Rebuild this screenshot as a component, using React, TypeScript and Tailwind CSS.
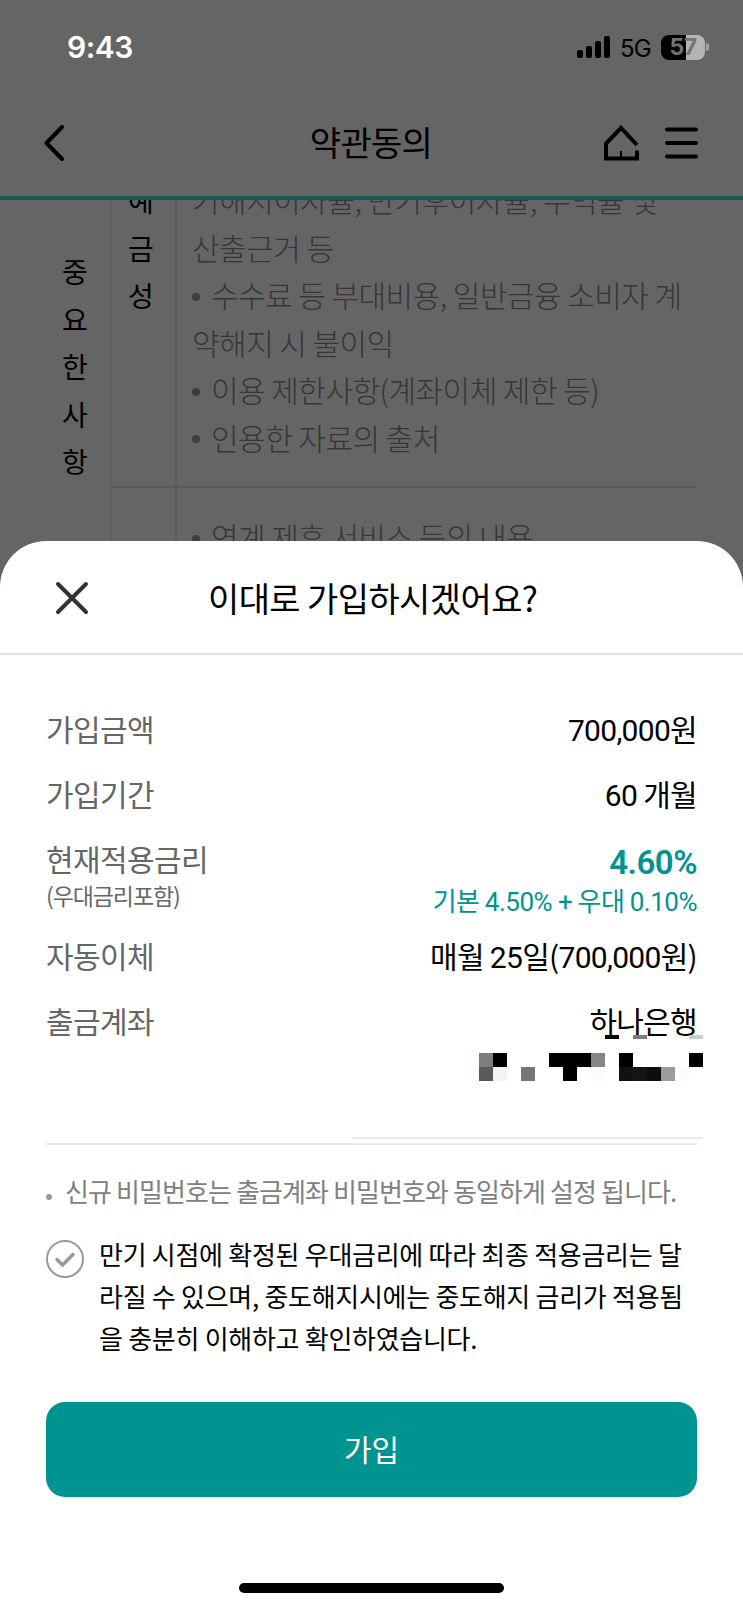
import { ReactNode } from 'react'

interface DetailRowProps {
  label: string
  note?: string
  className: string
  children: ReactNode
}

const termLines = [
  { text: '기해지이자율, 만기후이자율, 수익률 및', bullet: false },
  { text: '산출근거 등', bullet: false },
  { text: '수수료 등 부대비용, 일반금융 소비자 계', bullet: true },
  { text: '약해지 시 불이익', bullet: false },
  { text: '이용 제한사항(계좌이체 제한 등)', bullet: true },
  { text: '인용한 자료의 출처', bullet: true }
]

// Masked account number, one row of shades per strip
const maskTop = ['#fff', '#fdfdfd', '#7d7d7d', '#000', '#fff', '#fff', '#fff', '#000', '#000', '#000', '#868686', '#fff', '#000', '#fff', '#fff', '#fff', '#fff', '#000']
const maskBottom = ['#fff', '#fdfdfd', '#595959', '#f4f4f4', '#fff', '#767676', '#fff', '#fff', '#000', '#fff', '#fcfcfc', '#fff', '#111', '#151515', '#0d0d0d', '#9c9c9c', '#fcfcfc', '#fff']

function StatusBar() {
  return (
    <div className="flex h-[94px] items-center justify-between pl-[67px] pr-[34px]">
      <span className="font-[Inter] text-[30px] font-semibold leading-none tracking-[-0.5px] text-white">
        9:43
      </span>
      <div className="flex items-center">
        <svg className="h-6 w-[34px]" viewBox="0 0 34 24">
          <rect x="0" y="15" width="6" height="8" rx="2" />
          <rect x="9" y="11" width="6" height="12" rx="2" />
          <rect x="18" y="6" width="6" height="17" rx="2" />
          <rect x="27" y="1" width="6" height="22" rx="2" />
        </svg>
        <span className="ml-[9px] mt-[3px] w-[33px] whitespace-nowrap font-[Inter] text-[24px] leading-none tracking-[-0.8px]">
          5G
        </span>
        <div className="ml-2 flex h-[25px] w-11 items-center justify-center rounded-[8px] bg-[linear-gradient(90deg,#000_57%,#b4b4b4_57%)]">
          <span className="font-[Inter] text-[23px] font-bold leading-[25px] tracking-[-0.5px] text-[#737373]">57</span>
        </div>
        <div className="ml-px h-2 w-[3px] rounded-r-full bg-[#a3a3a3]" />
      </div>
    </div>
  )
}

function Header() {
  return (
    <header className="grid h-[106px] grid-cols-3 items-center border-b-4 border-[#1d5753] pb-1 pl-11 pr-[45px]">
      <svg className="h-9 w-5" viewBox="0 0 20 36" fill="none" stroke="#000" strokeWidth="4">
        <path d="M18 2 2.500 18l15.500 16" strokeLinecap="round" strokeLinejoin="round" />
      </svg>
      <h1 className="-mt-[3px] text-center text-[34px] leading-[50px] tracking-[-0.7px]">약관동의</h1>
      <div className="flex items-center justify-end gap-[26px]">
        <svg className="h-9 w-9" viewBox="0 0 36 36" fill="none" stroke="#000" strokeWidth="4">
          <path d="M34 20 18 3 3 18.500V33.500H34V25.500" />
          <path d="M18 33V26" strokeWidth="2" />
        </svg>
        <svg className="h-9 w-[33px]" viewBox="0 0 33 36" stroke="#000" strokeWidth="4" strokeLinecap="round">
          <path d="M2 4.500H31M2 18H31M2 31.500H31" />
        </svg>
      </div>
    </header>
  )
}

function Terms() {
  return (
    <div className="flex h-[360px] overflow-hidden pl-9 pr-[46px] text-[28px] leading-[47.5px]">
      <div className="flex w-[76px] flex-col items-center border-r-2 border-[#5d5e60] pl-1 pt-12">
        {['중', '요', '한', '사', '항'].map((char) => (
          <span key={char}>{char}</span>
        ))}
      </div>
      <div className="flex-1">
        <div className="flex h-[288px] border-b-2 border-[#585a5e]">
          <div className="flex w-[65px] shrink-0 flex-col items-center border-r-2 border-[#5a5b5d] pr-[5px]">
            {['예', '금', '성'].map((char) => (
              <span key={char} className="first:-mt-[23px]">{char}</span>
            ))}
          </div>
          <ul className="-mt-6 ml-[15px] text-[30px] font-light tracking-[-0.53px] text-[#363636]">
            {termLines.map((line) => (
              <li key={line.text} className="flex items-center whitespace-nowrap">
                {line.bullet && <i className="mr-[11px] mt-1 size-2 rounded-full bg-[#3d3d3d]" />}
                {line.text}
              </li>
            ))}
          </ul>
        </div>
        <div className="flex h-[80px]">
          <div className="w-[65px] border-r-2 border-[#5a5b5d]" />
          <div className="ml-[15px] mt-[17px] flex items-center text-[30px] font-light tracking-[-0.53px] text-[#363636]">
            <i className="mr-[11px] mt-1 size-2 rounded-full bg-[#3d3d3d]" />
            연계 제휴 서비스 등의 내용
          </div>
        </div>
      </div>
    </div>
  )
}

function DetailRow({ label, note, className, children }: DetailRowProps) {
  return (
    <div className={`flex justify-between ${className}`}>
      <dt className="text-[30px] leading-[38px] tracking-[-0.6px] text-[#666]">
        {label}
        {note && <p className="text-[23px] leading-[36px] tracking-[-1.1px]">{note}</p>}
      </dt>
      <dd className="text-right text-[30px] leading-[38px] tracking-[-0.7px] text-black">{children}</dd>
    </div>
  )
}

function MaskedAccount() {
  return (
    <div className="absolute right-[-6px] top-[34px] w-[252px]">
      <div className="ml-auto flex h-1 w-[98px]">
        <i className="w-3.5 bg-black" />
        <i className="ml-3.5 w-3.5 bg-[#7d7d7d]" />
        <i className="ml-auto w-3.5 bg-[#ccc]" />
      </div>
      {[maskTop, maskBottom].map((shades, row) => (
        <div key={row} className="flex h-3.5 nth-2:mt-3.5">
          {shades.map((shade, i) => (
            <i key={i} className="w-3.5" style={{ backgroundColor: shade }} />
          ))}
        </div>
      ))}
    </div>
  )
}

export default function App() {
  return (
    <main className="h-[1608px] w-[743px] overflow-hidden bg-[#656565] font-['Noto_Sans_CJK_KR',sans-serif] text-black">
      <StatusBar />
      <Header />
      <Terms />
      <section className="relative z-10 -mt-[19px] flex h-[1067px] flex-col rounded-t-[46px] bg-white">
        <div className="flex h-[114px] items-center border-b-2 border-[#e3e3e3] pl-[55px] pt-0.5">
          <svg className="size-[34px]" viewBox="0 0 34 34" stroke="#333" strokeWidth="4" strokeLinecap="round">
            <path d="M3 3 31 31M31 3 3 31" />
          </svg>
          <h2 className="mb-0.5 ml-[119px] whitespace-nowrap text-[34px] tracking-[-0.6px]">
            이대로 가입하시겠어요?
          </h2>
        </div>
        <dl className="mx-[46px] flex h-[490px] flex-col border-b-2 border-[#e8e9ec] pt-[54px]">
          <DetailRow label="가입금액" className="h-[65px]">
            <span className="font-[Roboto]">700,000</span>원
          </DetailRow>
          <DetailRow label="가입기간" className="h-[65px]">
            <span className="font-[Roboto]">60</span> 개월
          </DetailRow>
          <DetailRow label="현재적용금리" note="(우대금리포함)" className="h-[97px]">
            <p className="pt-[5px] font-[Roboto] text-[33px] font-semibold leading-[38px] tracking-[-0.5px] text-[#009490]">4.60%</p>
            <p className="-mt-px text-[26px] tracking-[-0.5px] text-[#009490]">
              기본 <span className="font-[Roboto]">4.50% +</span> 우대 <span className="font-[Roboto]">0.10%</span>
            </p>
          </DetailRow>
          <DetailRow label="자동이체" className="h-[65px]">
            매월 <span className="font-[Roboto]">25</span>일(<span className="font-[Roboto]">700,000</span>원)
          </DetailRow>
          <DetailRow label="출금계좌" className="relative h-[65px]">
            하나은행
            <MaskedAccount />
          </DetailRow>
          <div className="-mr-[6px] ml-auto mt-auto mb-1 h-0.5 w-[351px] bg-[#e8e9ec]" />
        </dl>
        <p className="mx-[46px] mt-[26px] flex items-center whitespace-nowrap text-[26px] leading-[40px] tracking-[-0.9px] text-[#808080]">
          <i className="mr-[13px] mt-3 size-1.5 rounded-full bg-[#999]" />
          신규 비밀번호는 출금계좌 비밀번호와 동일하게 설정 됩니다.
        </p>
        <div className="mx-[46px] mt-[22px] flex">
          <svg className="mt-[7px] size-[38px] shrink-0" viewBox="0 0 38 38" fill="none" stroke="#999">
            <circle cx="19" cy="19" r="18" strokeWidth="2" />
            <path d="M11 19.500 16.500 25 27 14.500" strokeWidth="3.500" strokeLinecap="round" />
          </svg>
          <p className="ml-[15px] whitespace-nowrap text-[26px] leading-[42px] tracking-[-0.28px]">
            만기 시점에 확정된 우대금리에 따라 최종 적용금리는 달
            <br />
            라질 수 있으며, 중도해지시에는 중도해지 금리가 적용됨
            <br />
            을 충분히 이해하고 확인하였습니다.
          </p>
        </div>
        <button className="mx-[46px] mt-[43px] h-[95px] shrink-0 rounded-[19px] bg-[#009490] pb-0.5 text-[30px] text-white">
          가입
        </button>
        <div className="mx-auto mt-auto mb-[15px] h-[10px] w-[265px] rounded-full bg-black" />
      </section>
    </main>
  )
}
